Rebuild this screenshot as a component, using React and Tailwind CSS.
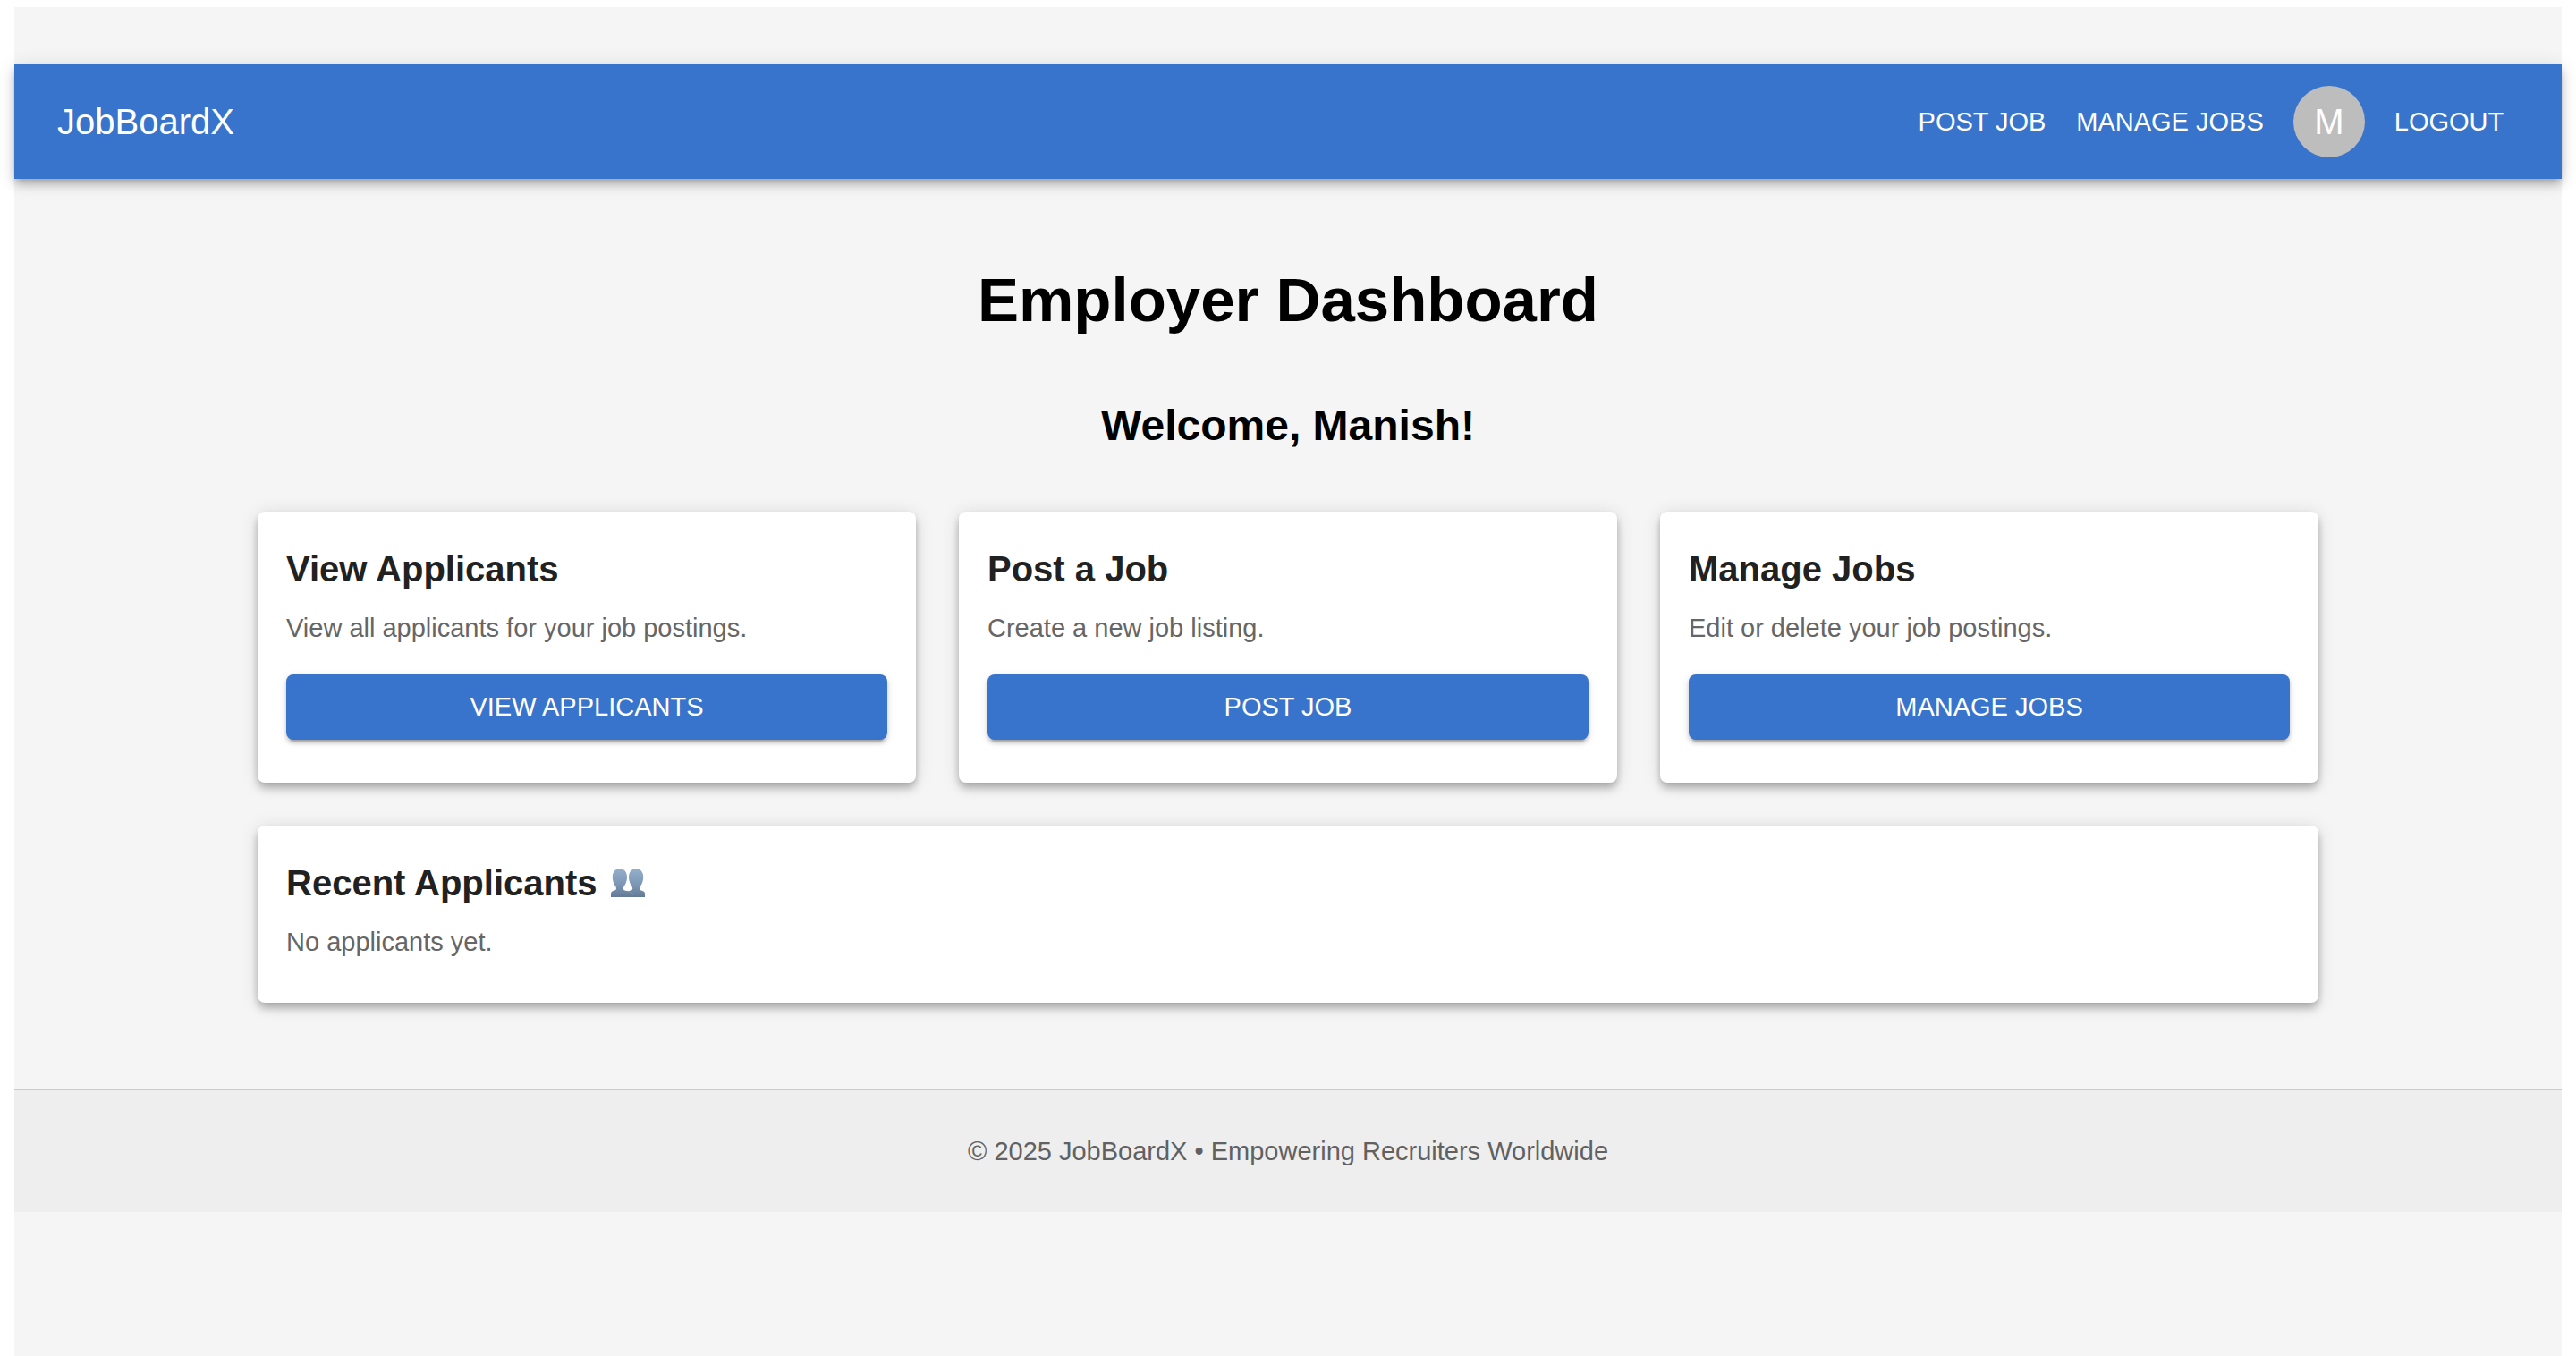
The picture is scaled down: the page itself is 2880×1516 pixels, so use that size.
const actions = [
  {
    title: "View Applicants",
    text: "View all applicants for your job postings.",
    label: "VIEW APPLICANTS",
  },
  { title: "Post a Job", text: "Create a new job listing.", label: "POST JOB" },
  {
    title: "Manage Jobs",
    text: "Edit or delete your job postings.",
    label: "MANAGE JOBS",
  },
];

const cardClass =
  "rounded-lg bg-white px-8 pt-8 pb-12 shadow-[0_4px_8px_-2px_rgba(0,0,0,0.2),0_8px_10px_0_rgba(0,0,0,0.14),0_2px_20px_0_rgba(0,0,0,0.12)]";

function PeopleIcon() {
  return (
    <svg
      className="h-8 w-[38px]"
      viewBox="0 0 38 32"
      role="img"
      aria-label="People"
    >
      <defs>
        <linearGradient
          id="bust"
          gradientUnits="userSpaceOnUse"
          x1="0"
          y1="0"
          x2="0"
          y2="32"
        >
          <stop offset="0" stopColor="#93afca" />
          <stop offset="0.5" stopColor="#7f9ab8" />
          <stop offset="1" stopColor="#647a97" />
        </linearGradient>
      </defs>
      <path
        fill="url(#bust)"
        d="M38 32H18V25.4C20.4 24.9 23 25 23.9 23.6C24.5 22.4 24.1 21 23.3 19.8C21.4 17.4 20.2 14.2 20 10.6C19.7 4.2 22.8 0.2 28.1 0.2C33.4 0.2 36.5 4.2 36.2 10.6C36 14.2 34.8 17.4 32.9 19.8C32.1 21 31.7 22.4 32.3 23.6C33.2 25 36 24.6 37.4 26.2C37.9 26.9 38 27.6 38 28.4Z"
      />
      <path
        fill="url(#bust)"
        d="M0 32H24.6C24.6 28.2 22.8 26 19.6 25.4C17.2 25 14.9 25 14.1 23.6C13.5 22.4 13.9 21 14.7 19.8C16.6 17.4 17.8 14.2 18 10.6C18.3 4.2 15.2 0.2 9.9 0.2C4.6 0.2 1.5 4.2 1.8 10.6C2 14.2 3.2 17.4 5.1 19.8C5.9 21 6.3 22.4 5.7 23.6C4.8 25 2 24.6 0.6 26.2C0.1 26.9 0 27.6 0 28.4Z"
      />
      <path
        fill="none"
        stroke="#7fa0b8"
        strokeWidth="0.8"
        d="M18.6 25.3C22.4 25.8 24.3 27.6 24.6 30"
      />
    </svg>
  );
}

export default function App() {
  return (
    <div className="flex min-h-screen flex-col bg-white px-4 pt-2 font-['Liberation_Sans',Arial,sans-serif]">
      <div className="flex-1 bg-[#f5f5f5] pt-16">
        <header className="flex h-32 items-center justify-between bg-[#3874cb] px-12 text-white shadow-[0_4px_8px_-2px_rgba(0,0,0,0.2),0_8px_10px_0_rgba(0,0,0,0.14),0_2px_20px_0_rgba(0,0,0,0.12)]">
          <div className="text-[40px] leading-[64px]">JobBoardX</div>
          <nav className="flex items-center text-[29px] leading-[49px]">
            <a href="#post" className="w-44 py-3 text-center">
              POST JOB
            </a>
            <a href="#manage" className="w-[244px] py-3 text-center">
              MANAGE JOBS
            </a>
            <div className="mx-4 flex size-20 items-center justify-center rounded-full bg-[#bdbdbd] text-[40px] leading-none">
              M
            </div>
            <button type="button" className="w-[156px] py-3 text-center">
              LOGOUT
            </button>
          </nav>
        </header>

        <main className="mx-auto max-w-[2304px] py-24">
          <h1 className="text-center text-[69px] leading-[80px] font-bold text-black">
            Employer Dashboard
          </h1>
          <h2 className="mt-[68px] text-center text-5xl leading-[64px] font-bold text-black">
            Welcome, Manish!
          </h2>

          <div className="mt-16 grid grid-cols-3 gap-12">
            {actions.map((action) => (
              <section key={action.title} className={cardClass}>
                <h3 className="text-[40px] leading-[64px] font-bold text-[#212121]">
                  {action.title}
                </h3>
                <p className="mt-3.5 text-[29px] leading-10 text-[#666666]">
                  {action.text}
                </p>
                <button
                  type="button"
                  className="mt-8 w-full rounded-lg bg-[#3874cb] py-3 text-[29px] leading-[49px] text-white shadow-[0_6px_2px_-4px_rgba(0,0,0,0.2),0_4px_4px_0_rgba(0,0,0,0.14),0_2px_10px_0_rgba(0,0,0,0.12)]"
                >
                  {action.label}
                </button>
              </section>
            ))}
            <section className={`col-span-3 ${cardClass}`}>
              <h3 className="flex items-center gap-4 text-[40px] leading-[64px] font-bold text-[#212121]">
                Recent Applicants
                <PeopleIcon />
              </h3>
              <p className="mt-3.5 text-[29px] leading-10 text-[#666666]">
                No applicants yet.
              </p>
            </section>
          </div>
        </main>

        <footer className="border-t-2 border-[#cccccc] bg-[#eeeeee] py-12 text-center text-[29px] leading-10 text-[#616161]">
          © 2025 JobBoardX • Empowering Recruiters Worldwide
        </footer>
      </div>
    </div>
  );
}
